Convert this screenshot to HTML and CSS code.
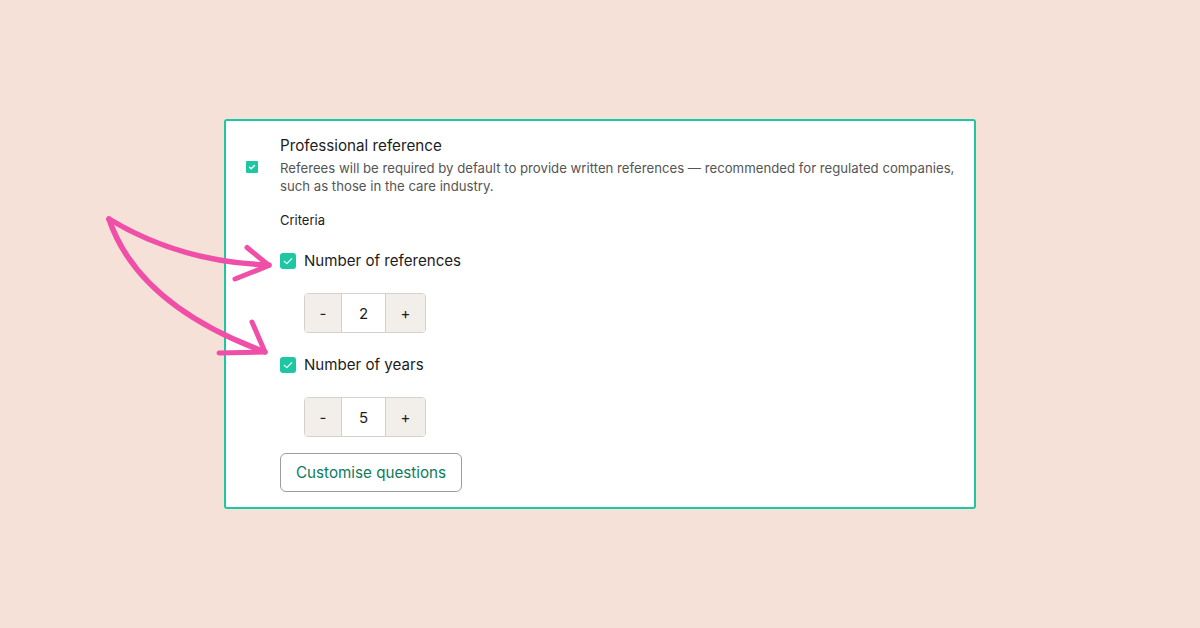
FILE: index.html
```html
<!DOCTYPE html>
<html lang="en">
<head>
  <meta charset="UTF-8">
  <title>Professional reference</title>
  <link rel="stylesheet" href="styles.css">
</head>
<body>

<div class="card">
  <div class="card-head">
    <span class="check check-small">
      <svg viewBox="0 0 12 12" width="12" height="12"><path d="M3.5 6.2 L5.2 7.8 L8.5 4.4" fill="none" stroke="#fff" stroke-width="1.4" stroke-linecap="round" stroke-linejoin="round"/></svg>
    </span>
    <div class="head-text">
      <div class="title">Professional reference</div>
      <p class="desc">Referees will be required by default to provide written references — recommended for regulated companies, such as those in the care industry.</p>
    </div>
  </div>

  <div class="card-body">
    <div class="criteria">Criteria</div>

    <label class="option">
      <span class="check">
        <svg viewBox="0 0 16 16" width="16" height="16"><path d="M4.2 8.3 L6.8 10.6 L11.8 5.6" fill="none" stroke="#fff" stroke-width="1.2" stroke-linecap="round" stroke-linejoin="round"/></svg>
      </span>
      Number of references
    </label>
    <div class="stepper">
      <button class="step-btn minus">-</button>
      <span class="step-value">2</span>
      <button class="step-btn plus">+</button>
    </div>

    <label class="option">
      <span class="check">
        <svg viewBox="0 0 16 16" width="16" height="16"><path d="M4.2 8.3 L6.8 10.6 L11.8 5.6" fill="none" stroke="#fff" stroke-width="1.2" stroke-linecap="round" stroke-linejoin="round"/></svg>
      </span>
      Number of years
    </label>
    <div class="stepper">
      <button class="step-btn minus">-</button>
      <span class="step-value">5</span>
      <button class="step-btn plus">+</button>
    </div>

    <button class="customise">Customise questions</button>
  </div>
</div>

<svg class="arrows" viewBox="0 0 1200 628" width="1200" height="628">
  <g fill="none" stroke="#ef4fa7" stroke-linecap="round" stroke-linejoin="round">
    <path d="M109 219 Q 180 262 269 265" stroke-width="5.5"/>
    <path d="M247 247.5 L269 265.5 L235 279" stroke-width="5"/>
    <path d="M109 219 Q 138 305 265 352" stroke-width="5.5"/>
    <path d="M252 322 L265 352 L219 353" stroke-width="5"/>
  </g>
</svg>

</body>
</html>
```

FILE: styles.css
```css
body {
  margin: 0;
  background: #f5e1d8;
  font-family: 'Inter', 'Noto Sans', sans-serif;
  color: #1d1d1d;
}
.card {
  width: 752px;
  box-sizing: border-box;
  margin: 119px auto 0;
  background: #fff;
  border: 2px solid #1cc7a1;
  border-radius: 3px;
  padding: 15px 8px 15px 20px;
}
.card-head {
  display: flex;
  align-items: center;
  gap: 22px;
}
.check {
  display: inline-flex;
  width: 16px;
  height: 16px;
  border-radius: 3px;
  background: #1cc7a1;
  flex-shrink: 0;
}
.check-small {
  width: 12px;
  height: 12px;
  border-radius: 1px;
  margin-top: 2px;
}
.title {
  font-size: 15.2px;
  line-height: 20px;
  color: #1d1d1d;
}
.desc {
  margin: 3px 0 0;
  font-size: 13.2px;
  line-height: 18px;
  color: #555;
}
.card-body {
  padding-left: 34px;
}
.criteria {
  margin-top: 16px;
  font-size: 13px;
  line-height: 18px;
}
.option {
  display: flex;
  align-items: center;
  gap: 8px;
  margin-top: 21px;
  font-size: 15.1px;
  line-height: 22px;
}
.stepper {
  display: inline-flex;
  margin: 21px 0 0 24px;
  height: 40px;
  border: 1px solid #d5d0cc;
  border-radius: 4px;
  box-sizing: border-box;
  overflow: hidden;
}
.step-btn {
  border: none;
  background: #f2efeb;
  font-family: inherit;
  font-size: 15px;
  color: #1d1d1d;
  padding: 0;
}
.minus {
  width: 36px;
}
.plus {
  width: 39px;
}
.step-value {
  width: 43px;
  display: flex;
  align-items: center;
  justify-content: center;
  border-left: 1px solid #d5d0cc;
  border-right: 1px solid #d5d0cc;
  font-size: 15px;
}
.customise {
  display: block;
  margin-top: 16px;
  height: 39px;
  padding: 0 15px;
  background: #fff;
  border: 1px solid #9c9c9c;
  border-radius: 6px;
  font-family: inherit;
  font-size: 15.2px;
  color: #0d7b5e;
}
.arrows {
  position: absolute;
  top: 0;
  left: 0;
  pointer-events: none;
}
```
